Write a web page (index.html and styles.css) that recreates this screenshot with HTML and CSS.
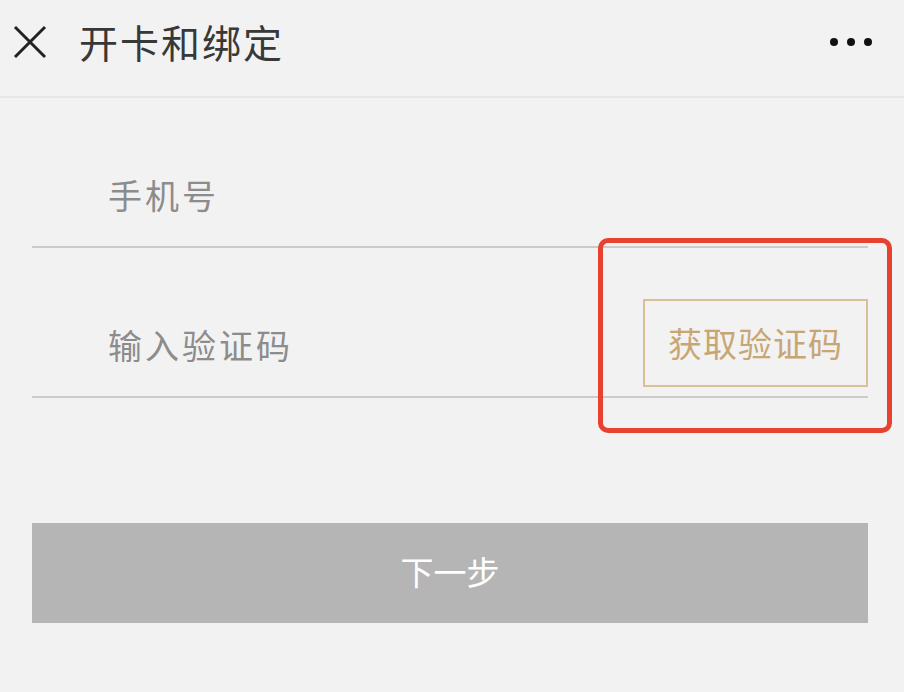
FILE: index.html
```html
<!DOCTYPE html>
<html lang="zh-CN">

<head>
    <meta charset="UTF-8">
    <meta name="viewport" content="width=device-width, initial-scale=1.0">
    <title>开卡和绑定</title>
    <link rel="stylesheet" href="styles.css">
</head>

<body>
    <div class="header">
        <svg class="close-icon" width="34" height="34" viewBox="0 0 34 34">
            <path d="M2 2 L32 32 M32 2 L2 32" stroke="#222" stroke-width="3" fill="none" />
        </svg>
        <h1 class="title">开卡和绑定</h1>
        <div class="more">
            <span class="dot"></span>
            <span class="dot"></span>
            <span class="dot"></span>
        </div>
    </div>

    <div class="form">
        <div class="field">
            <span class="placeholder">手机号</span>
        </div>
        <div class="field">
            <span class="placeholder">输入验证码</span>
            <button class="code-button">获取验证码</button>
        </div>
        <button class="next-button">下一步</button>
    </div>

    <!-- annotation box -->
    <div class="highlight"></div>
</body>

</html>
```

FILE: styles.css
```css
body {
    margin: 0;
    background: #f2f2f2;
    font-family: "Noto Sans CJK SC", "Noto Sans", sans-serif;
    width: 904px;
    height: 692px;
    overflow: hidden;
    position: relative;
}

.header {
    display: flex;
    align-items: center;
    height: 84px;
    padding: 0 32px 12px 13px;
    border-bottom: 2px solid #e6e6e6;
}

.close-icon {
    flex: none;
    margin-top: -1px;
}

.title {
    margin: -3px 0 0 32px;
    font-size: 39px;
    font-weight: 400;
    color: #383838;
    letter-spacing: 2px;
    flex: 1;
}

.more {
    display: flex;
    gap: 9px;
}

.dot {
    width: 8px;
    height: 8px;
    border-radius: 50%;
    background: #111;
}

.form {
    padding: 0 36px 0 32px;
}

.field {
    display: flex;
    align-items: center;
    justify-content: space-between;
    height: 100px;
    padding-top: 48px;
    border-bottom: 2px solid #cbcbcb;
}

.placeholder {
    padding-left: 76px;
    font-size: 34px;
    color: #8c8c8c;
    letter-spacing: 3px;
    margin-top: -3px;
}

.code-button {
    width: 225px;
    height: 88px;
    margin-bottom: 7px;
    background: transparent;
    border: 2px solid #d9c096;
    color: #c8a674;
    font-family: inherit;
    font-size: 34px;
    letter-spacing: 1px;
    padding: 0;
}

.next-button {
    display: block;
    width: 100%;
    height: 100px;
    margin-top: 125px;
    background: #b5b5b5;
    border: none;
    color: #fff;
    font-family: inherit;
    font-size: 33px;
    padding: 0 0 4px;
}

.highlight {
    position: absolute;
    left: 598px;
    top: 238px;
    width: 284px;
    height: 185px;
    border: 5px solid #e8412f;
    border-radius: 10px;
}
```
